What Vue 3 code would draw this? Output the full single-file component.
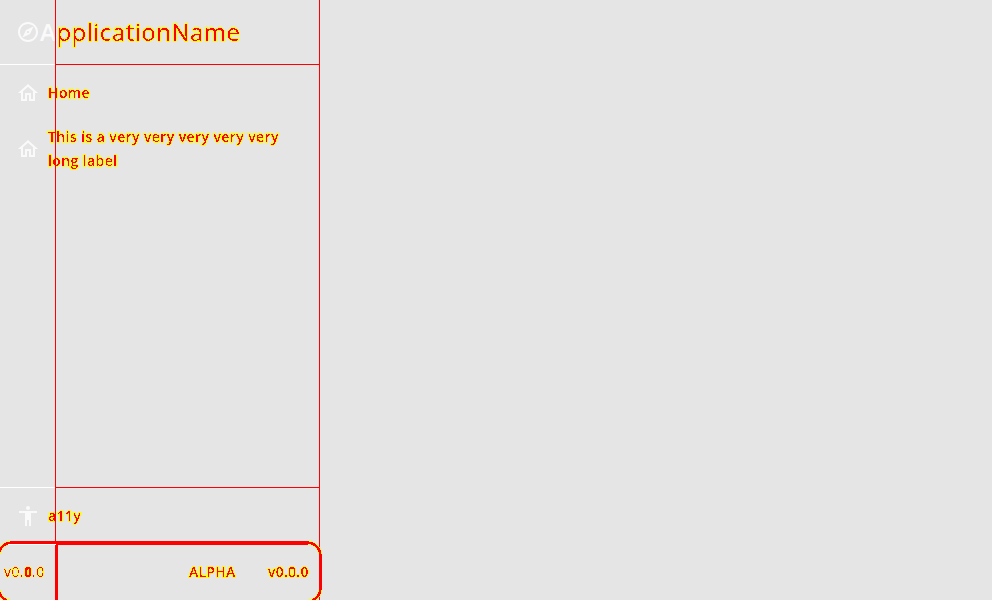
<script setup>
const links = [
  { label: 'Home' },
  { label: 'This is a very very very very very long label' },
]
</script>

<template>
  <div class="page">
    <svg class="defs" width="0" height="0">
      <filter id="edge" x="-2%" y="-10%" width="104%" height="120%" color-interpolation-filters="sRGB">
        <feComponentTransfer in="SourceAlpha" result="wide"><feFuncA type="discrete" tableValues="0 0 1 1 1 1 1 1 1 1" /></feComponentTransfer>
        <feComponentTransfer in="SourceAlpha" result="core"><feFuncA type="discrete" tableValues="0 0 0 0 0 0 0 0 1 1" /></feComponentTransfer>
        <feFlood flood-color="#ff0" />
        <feComposite in2="wide" operator="in" result="yellow" />
        <feFlood flood-color="#f00" />
        <feComposite in2="core" operator="in" result="red" />
        <feMerge><feMergeNode in="yellow" /><feMergeNode in="red" /></feMerge>
      </filter>
    </svg>
    <aside class="drawer">
      <header class="brand">
        <svg class="icon" viewBox="0 0 24 24"><path d="M12 2C6.500 2 2 6.500 2 12s4.500 10 10 10 10-4.500 10-10S17.500 2 12 2zm0 18c-4.410 0-8-3.590-8-8s3.590-8 8-8 8 3.590 8 8-3.590 8-8 8zm-5.500-2.500l7.510-3.490L17.500 6.500 9.990 9.990 6.500 17.500zm5.500-6.600c.610 0 1.100.490 1.100 1.100s-.490 1.100-1.100 1.100-1.100-.490-1.100-1.100.490-1.100 1.100-1.100z" /></svg>
        <span class="name"><span class="initial">A</span><span class="mark">pplicationName</span></span>
      </header>
      <nav class="links">
        <a v-for="link in links" :key="link.label" class="link">
          <svg class="icon" viewBox="0 0 24 24"><path d="M12 5.690l5 4.500V18h-2v-6H9v6H7v-7.810l5-4.500M12 3L2 12h3v8h6v-6h2v6h6v-8h3L12 3z" /></svg>
          <span class="label mark">{{ link.label }}</span>
        </a>
      </nav>
      <a class="link access">
        <svg class="icon" viewBox="0 0 24 24"><path d="M12 2a2 2 0 1 1 0 4 2 2 0 0 1 0-4zm9 7h-6v13h-2v-6h-2v6H9V9H3V7h18v2z" /></svg>
        <span class="label mark">a11y</span>
      </a>
      <footer class="release mark">
        <span class="short">v0.<b>0</b>.0</span>
        <span class="stage">ALPHA</span>
        <span class="version">v0.0.0</span>
      </footer>
      <div class="rail"></div>
      <div class="frame mark"></div>
      <div class="frame-line"></div>
      <div class="rail-line"></div>
    </aside>
  </div>
</template>

<style>
body {
  background: #e5e5e5;
}
</style>

<style scoped>
.page {
  position: relative;
  height: 600px;
  overflow: hidden;
  background: #e5e5e5;
  font-family: "Open Sans", sans-serif;
}
.defs {
  position: absolute;
}
.drawer {
  position: relative;
  display: flex;
  flex-direction: column;
  box-sizing: border-box;
  width: 320px;
  height: 600px;
  border-right: 1px solid #f00;
}
.brand {
  display: flex;
  align-items: center;
  height: 64px;
  padding: 0 0 1px 16px;
  background: linear-gradient(to right, #fff 56px, #f00 56px) bottom / 100% 1px no-repeat;
}
.icon {
  flex: none;
  width: 24px;
  height: 24px;
  fill: #fafafa;
}
.name {
  display: flex;
  font-size: 24px;
  letter-spacing: 0.5px;
  line-height: 32px;
}
.initial {
  color: #fafafa;
  font-weight: 600;
}
.mark {
  color: #f00;
  -webkit-text-stroke: 1.5px rgba(255, 0, 0, 0.5);
  paint-order: stroke fill;
  filter: url(#edge);
}
.links {
  flex: 1;
}
.link {
  display: flex;
  align-items: center;
  box-sizing: border-box;
  height: 56px;
  padding-left: 16px;
}
.label {
  width: 244px;
  margin-left: 8px;
  font-size: 14px;
  font-weight: 600;
  letter-spacing: 0.4px;
  line-height: 24px;
}
.access {
  height: 57px;
  padding-top: 1px;
  background: linear-gradient(to right, #fff 56px, #f00 56px) top / 100% 1px no-repeat;
}
.release {
  display: flex;
  align-items: center;
  box-sizing: border-box;
  height: 56px;
  padding-left: 4px;
  font-size: 14px;
  font-weight: 600;
  line-height: 24px;
  letter-spacing: 0.25px;
}
.short {
  width: 185px;
  font-weight: 400;
  letter-spacing: 0.4px;
  -webkit-text-stroke-width: 0.8px;
}
.short b {
  font-weight: 800;
  letter-spacing: 0;
}
.stage {
  width: 79px;
}
.rail {
  position: absolute;
  top: 0;
  left: 55px;
  width: 1px;
  height: 541px;
  background: #f00;
}
.frame {
  position: absolute;
  top: 541px;
  left: -3px;
  box-sizing: border-box;
  width: 325px;
  height: 62px;
  border: 3px solid #f00;
  border-radius: 15px;
}
.frame-line {
  position: absolute;
  top: 544px;
  left: 8px;
  width: 300px;
  height: 1px;
  background: linear-gradient(to right, #fff 48px, #f00 48px);
}
.rail-line {
  position: absolute;
  top: 545px;
  left: 55px;
  width: 3px;
  height: 55px;
  background: #f00;
}
</style>
